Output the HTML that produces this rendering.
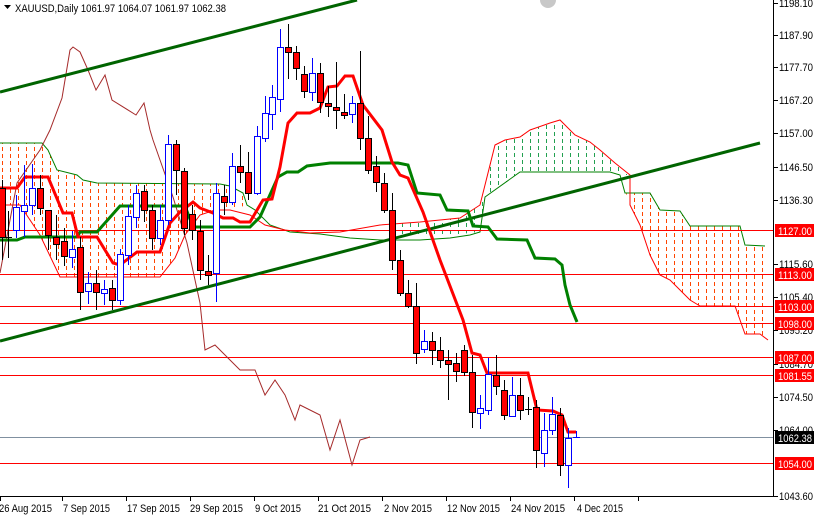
<!DOCTYPE html>
<html><head><meta charset="utf-8"><style>
html,body{margin:0;padding:0;background:#fff;width:814px;height:516px;overflow:hidden}
svg{display:block;font-family:"Liberation Sans",sans-serif}
</style></head><body>
<svg width="814" height="516" viewBox="0 0 814 516" xmlns="http://www.w3.org/2000/svg">
<defs>
<clipPath id="c1"><polygon points="0,143 42,143 48,150 57,170 77,175 83,180 97,183 220,184 230,186 243,193 247,205 230,210 215,210 200,215 185,235 175,258 160,277 60,277 40,235 20,205 0,205"/></clipPath>
<clipPath id="c2"><polygon points="485,185 495,145 505,140 520,137 530,130 550,123 560,120 575,135 590,142 600,150 615,163 630,175 620,175 610,172 520,172 485,197"/></clipPath>
<clipPath id="c3"><polygon points="620,175 625,193 650,193 660,210 680,211 690,226 740,226 745,245 765,246 768,340 760,334 745,334 740,320 735,306 700,306 690,300 680,290 670,280 660,275 650,255 640,225 630,205"/></clipPath>
<clipPath id="c4"><polygon points="385,225 420,222 460,218 480,205 485,197 480,232 440,236 400,236"/></clipPath>
</defs>
<rect width="814" height="516" fill="#fff"/>
<!-- clouds -->
<g stroke-width="1" stroke-dasharray="4,3">
<path clip-path="url(#c1)" stroke="#ff4500" d="M2.5 140V280M10.5 140V280M18.5 140V280M26.5 140V280M34.5 140V280M42.5 140V280M50.5 140V280M58.5 140V280M66.5 140V280M74.5 140V280M82.5 140V280M90.5 140V280M98.5 140V280M106.5 140V280M114.5 140V280M122.5 140V280M130.5 140V280M138.5 140V280M146.5 140V280M154.5 140V280M162.5 140V280M170.5 140V280M178.5 140V280M186.5 140V280M194.5 140V280M202.5 140V280M210.5 140V280M218.5 140V280M226.5 140V280M234.5 140V280M242.5 140V280"/>
<path clip-path="url(#c2)" stroke="#22a050" d="M490.5 118V200M498.5 118V200M506.5 118V200M514.5 118V200M522.5 118V200M530.5 118V200M538.5 118V200M546.5 118V200M554.5 118V200M562.5 118V200M570.5 118V200M578.5 118V200M586.5 118V200M594.5 118V200M602.5 118V200M610.5 118V200M618.5 118V200M626.5 118V200"/>
<path clip-path="url(#c3)" stroke="#ff4500" d="M626.5 170V342M634.5 170V342M642.5 170V342M650.5 170V342M658.5 170V342M666.5 170V342M674.5 170V342M682.5 170V342M690.5 170V342M698.5 170V342M706.5 170V342M714.5 170V342M722.5 170V342M730.5 170V342M738.5 170V342M746.5 170V342M754.5 170V342M762.5 170V342"/>
<path clip-path="url(#c4)" stroke="#22a050" d="M394.5 195V240M402.5 195V240M410.5 195V240M418.5 195V240M426.5 195V240M434.5 195V240M442.5 195V240M450.5 195V240M458.5 195V240M466.5 195V240M474.5 195V240M482.5 195V240"/>
</g>
<!-- senkou lines -->
<polyline fill="none" stroke="#008000" stroke-width="1" points="0,143 42,143 48,150 57,170 77,175 83,180 97,183 220,184 230,186 243,193 247,205 255,210 270,225 290,232 320,234 350,238 380,240 420,240 450,238 470,235 480,232 485,197 520,172 610,172 620,175 625,193 650,193 660,210 680,211 690,226 740,226 745,245 765,246"/>
<polyline fill="none" stroke="#ff0000" stroke-width="1" points="0,205 20,205 40,235 60,277 160,277 175,258 185,235 200,215 215,210 230,210 250,215 265,225 285,230 310,233 340,232 380,225 420,222 460,218 480,205 485,185 495,145 505,140 520,137 530,130 550,123 560,120 575,135 590,142 600,150 615,163 630,175 630,205 640,225 650,255 660,275 670,280 680,290 690,300 700,306 735,306 740,320 745,334 760,334 768,340"/>
<!-- horizontal levels -->
<g stroke="#ff0000" stroke-width="1">
<line x1="0" y1="230.5" x2="773" y2="230.5"/><line x1="0" y1="274.5" x2="773" y2="274.5"/>
<line x1="0" y1="306.5" x2="773" y2="306.5"/><line x1="0" y1="323.5" x2="773" y2="323.5"/>
<line x1="0" y1="357.5" x2="773" y2="357.5"/><line x1="0" y1="375.5" x2="773" y2="375.5"/>
<line x1="0" y1="463.5" x2="773" y2="463.5"/></g>
<line x1="0" y1="437.5" x2="773" y2="437.5" stroke="#8090a0"/>
<!-- chikou -->
<polyline fill="none" stroke="#a52a2a" stroke-width="1" points="0,273 10,220 17,183 40,150 50,130 62,98 70,50 73,47 80,52 88,70 96,90 105,75 112,100 136,115 144,103 150,130 153,140 173,197 187,243 200,303 205,350 215,345 240,370 255,370 265,395 275,380 285,395 295,420 300,405 320,415 330,450 340,420 352,465 360,440 370,437"/>
<!-- trendlines -->
<line x1="0" y1="92" x2="357" y2="0" stroke="#006400" stroke-width="3"/>
<line x1="0" y1="341" x2="760" y2="143" stroke="#006400" stroke-width="3"/>
<!-- kijun -->
<polyline fill="none" stroke="#008000" stroke-width="3" points="0,240 17,240 25,237 77,237 80,232 97,232 120,206 185,206 193,227 250,227 260,217 278,177 287,172 298,172 307,166 330,163 398,163 408,165 417,193 440,195 447,210 468,211 473,226 488,227 497,239 527,240 535,258 555,259 562,265 565,285 570,305 577,322"/>
<!-- tenkan -->
<polyline fill="none" stroke="#ff0000" stroke-width="3" points="0,188 17,188 25,177 48,177 63,213 72,213 78,237 97,237 113,263 120,265 137,252 160,252 170,223 180,212 193,202 200,208 213,213 223,218 233,218 240,222 250,222 263,200 272,199 280,167 288,123 297,113 310,113 320,108 328,87 337,86 345,76 353,76 363,105 382,130 392,162 400,175 408,178 423,212 440,260 463,320 472,353 480,355 487,373 528,373 537,410 553,411 562,415 568,432 576,432"/>
<!-- bear candles -->
<g stroke="#000" stroke-width="1" fill="#ff0000">
<path d="M2.5 180V260M40.5 175V215M48.5 210V250M56.5 215V260M64.5 228V266M80.5 237V310M96.5 270V310M112.5 280V310M144.5 185V222M152.5 205V250M176.5 140V195M184.5 168V235M192.5 205V240M200.5 220V280M208.5 255V285M224.5 185V215M240.5 145V183M248.5 152V200M288.5 24V79M296.5 46V80M304.5 66V98M320.5 63V113M328.5 86V117M336.5 62V129M344.5 94V119M360.5 51V150M368.5 116V174M376.5 156V192M384.5 173V213M392.5 193V270M400.5 250V296M408.5 280V308M416.5 283V364M432.5 332V365M440.5 337V368M448.5 350V400M456.5 353V382M464.5 345V376M472.5 355V428M496.5 355V395M504.5 380V420M520.5 378V420M536.5 400V468M560.5 408V476M8.5 211V258M528.5 397V415"/>
<rect x="-1.5" y="188.5" width="7" height="49"/><rect x="37.5" y="188.5" width="6" height="20"/><rect x="45.5" y="210.5" width="6" height="25"/><rect x="53.5" y="237.5" width="6" height="7"/><rect x="61.5" y="241.5" width="6" height="15"/><rect x="77.5" y="247.5" width="6" height="45"/><rect x="93.5" y="283.5" width="6" height="9"/><rect x="109.5" y="288.5" width="6" height="12"/><rect x="141.5" y="191.5" width="6" height="19"/><rect x="149.5" y="210.5" width="6" height="28"/><rect x="173.5" y="144.5" width="6" height="26"/><rect x="181.5" y="171.5" width="6" height="57"/><rect x="189.5" y="214.5" width="6" height="16"/><rect x="197.5" y="231.5" width="6" height="39"/><rect x="205.5" y="271.5" width="6" height="4"/><rect x="221.5" y="196.5" width="6" height="6"/><rect x="237.5" y="166.5" width="6" height="6"/><rect x="245.5" y="172.5" width="6" height="21"/><rect x="285.5" y="47.5" width="6" height="5"/><rect x="293.5" y="52.5" width="6" height="16"/><rect x="301.5" y="74.5" width="6" height="17"/><rect x="317.5" y="73.5" width="6" height="29"/><rect x="325.5" y="103.5" width="6" height="3"/><rect x="333.5" y="107.5" width="6" height="3"/><rect x="341.5" y="112.5" width="6" height="3"/><rect x="357.5" y="103.5" width="6" height="35"/><rect x="365.5" y="138.5" width="6" height="32"/><rect x="373.5" y="166.5" width="6" height="16"/><rect x="381.5" y="183.5" width="6" height="27"/><rect x="389.5" y="210.5" width="6" height="50"/><rect x="397.5" y="260.5" width="6" height="33"/><rect x="405.5" y="293.5" width="6" height="13"/><rect x="413.5" y="306.5" width="6" height="47"/><rect x="429.5" y="341.5" width="6" height="9"/><rect x="437.5" y="350.5" width="6" height="10"/><rect x="445.5" y="360.5" width="6" height="4"/><rect x="453.5" y="363.5" width="6" height="8"/><rect x="461.5" y="350.5" width="6" height="22"/><rect x="469.5" y="372.5" width="6" height="40"/><rect x="493.5" y="375.5" width="6" height="11"/><rect x="501.5" y="390.5" width="6" height="25"/><rect x="517.5" y="395.5" width="6" height="15"/><rect x="533.5" y="407.5" width="6" height="43"/><rect x="557.5" y="415.5" width="6" height="50"/>
<path d="M5 237.5H12M525 409.5H532" fill="none"/>
</g>
<!-- bull candles -->
<g stroke="#0000ff" stroke-width="1" fill="#fff">
<path d="M16.5 195V238M24.5 165V237M32.5 164V215M72.5 231V268M88.5 272V304M104.5 280V305M120.5 249V305M128.5 205V265M136.5 185V228M160.5 205V245M168.5 135V225M216.5 183V302M232.5 153V205M257.5 126V195M265.5 96V142M272.5 85V130M280.5 29V112M312.5 58V101M352.5 96V123M424.5 330V353M480.5 395V429M488.5 358V415M512.5 377V417M544.5 413V467M552.5 397V435M568.5 428V488M576.5 431V438M573 437.5H580"/>
<rect x="13.5" y="207.5" width="6" height="23"/><rect x="21.5" y="205.5" width="6" height="6"/><rect x="29.5" y="188.5" width="6" height="17"/><rect x="69.5" y="249.5" width="6" height="8"/><rect x="85.5" y="283.5" width="6" height="8"/><rect x="101.5" y="289.5" width="6" height="4"/><rect x="117.5" y="254.5" width="6" height="46"/><rect x="125.5" y="216.5" width="6" height="39"/><rect x="133.5" y="193.5" width="6" height="24"/><rect x="157.5" y="220.5" width="6" height="18"/><rect x="165.5" y="144.5" width="6" height="76"/><rect x="213.5" y="193.5" width="6" height="80"/><rect x="229.5" y="166.5" width="6" height="36"/><rect x="254.5" y="136.5" width="6" height="57"/><rect x="262.5" y="113.5" width="6" height="25"/><rect x="269.5" y="97.5" width="6" height="17"/><rect x="277.5" y="47.5" width="6" height="52"/><rect x="309.5" y="73.5" width="6" height="19"/><rect x="349.5" y="103.5" width="6" height="11"/><rect x="421.5" y="341.5" width="6" height="8"/><rect x="477.5" y="408.5" width="6" height="5"/><rect x="485.5" y="374.5" width="6" height="36"/><rect x="509.5" y="395.5" width="6" height="21"/><rect x="541.5" y="430.5" width="6" height="23"/><rect x="549.5" y="414.5" width="6" height="16"/><rect x="565.5" y="438.5" width="6" height="27"/>
</g>
<!-- axes -->
<line x1="773.5" y1="0" x2="773.5" y2="497" stroke="#000"/>
<line x1="0" y1="496.5" x2="774" y2="496.5" stroke="#000"/>
<path d="M540 0A8 8 0 0 0 556 0Z" fill="#c8c8c8"/>
<g font-size="11" fill="#000" lengthAdjust="spacingAndGlyphs">
<path d="M774 3.5h4M774 35.5h4M774 67.5h4M774 100.5h4M774 133.5h4M774 167.5h4M774 200.5h4M774 264.5h4M774 297.5h4M774 330.5h4M774 364.5h4M774 397.5h4M774 430.5h4M774 496.5h4" stroke="#000"/>
<text x="779" y="7" textLength="34" lengthAdjust="spacingAndGlyphs">1198.10</text><text x="779" y="39" textLength="34" lengthAdjust="spacingAndGlyphs">1187.90</text><text x="779" y="71" textLength="34" lengthAdjust="spacingAndGlyphs">1177.70</text><text x="779" y="104" textLength="34" lengthAdjust="spacingAndGlyphs">1167.20</text><text x="779" y="137" textLength="34" lengthAdjust="spacingAndGlyphs">1157.00</text><text x="779" y="171" textLength="34" lengthAdjust="spacingAndGlyphs">1146.50</text><text x="779" y="204" textLength="34" lengthAdjust="spacingAndGlyphs">1136.30</text><text x="779" y="268" textLength="34" lengthAdjust="spacingAndGlyphs">1115.60</text><text x="779" y="301" textLength="34" lengthAdjust="spacingAndGlyphs">1105.40</text><text x="779" y="334" textLength="34" lengthAdjust="spacingAndGlyphs">1095.20</text><text x="779" y="368" textLength="34" lengthAdjust="spacingAndGlyphs">1084.70</text><text x="779" y="401" textLength="34" lengthAdjust="spacingAndGlyphs">1074.50</text><text x="779" y="434" textLength="34" lengthAdjust="spacingAndGlyphs">1064.00</text><text x="779" y="500" textLength="34" lengthAdjust="spacingAndGlyphs">1043.60</text>
</g>
<g font-size="11" fill="#fff">
<rect x="775" y="224" width="39" height="13" fill="#f00"/><text x="778" y="235" textLength="34" lengthAdjust="spacingAndGlyphs">1127.00</text>
<rect x="775" y="268" width="39" height="13" fill="#f00"/><text x="778" y="279" textLength="34" lengthAdjust="spacingAndGlyphs">1113.00</text>
<rect x="775" y="300" width="39" height="13" fill="#f00"/><text x="778" y="311" textLength="34" lengthAdjust="spacingAndGlyphs">1103.00</text>
<rect x="775" y="317" width="39" height="13" fill="#f00"/><text x="778" y="328" textLength="34" lengthAdjust="spacingAndGlyphs">1098.00</text>
<rect x="775" y="351" width="39" height="13" fill="#f00"/><text x="778" y="362" textLength="34" lengthAdjust="spacingAndGlyphs">1087.00</text>
<rect x="775" y="369" width="39" height="13" fill="#f00"/><text x="778" y="380" textLength="34" lengthAdjust="spacingAndGlyphs">1081.55</text>
<rect x="775" y="431" width="39" height="13" fill="#000"/><text x="778" y="442" textLength="34" lengthAdjust="spacingAndGlyphs">1062.38</text>
<rect x="775" y="457" width="39" height="13" fill="#f00"/><text x="778" y="468" textLength="34" lengthAdjust="spacingAndGlyphs">1054.00</text>
</g>
<g font-size="11" fill="#000">
<path d="M0.5 497v4M62.5 497v4M126.5 497v4M190.5 497v4M254.5 497v4M318.5 497v4M382.5 497v4M446.5 497v4M510.5 497v4M574.5 497v4M638.5 497v4" stroke="#000"/>
<text x="-1" y="512" textLength="53" lengthAdjust="spacingAndGlyphs">26 Aug 2015</text><text x="63" y="512" textLength="47" lengthAdjust="spacingAndGlyphs">7 Sep 2015</text><text x="127" y="512" textLength="53" lengthAdjust="spacingAndGlyphs">17 Sep 2015</text><text x="190" y="512" textLength="53" lengthAdjust="spacingAndGlyphs">29 Sep 2015</text><text x="255" y="512" textLength="46" lengthAdjust="spacingAndGlyphs">9 Oct 2015</text><text x="318" y="512" textLength="53" lengthAdjust="spacingAndGlyphs">21 Oct 2015</text><text x="384" y="512" textLength="48" lengthAdjust="spacingAndGlyphs">2 Nov 2015</text><text x="447" y="512" textLength="53" lengthAdjust="spacingAndGlyphs">12 Nov 2015</text><text x="511" y="512" textLength="54" lengthAdjust="spacingAndGlyphs">24 Nov 2015</text><text x="577" y="512" textLength="46" lengthAdjust="spacingAndGlyphs">4 Dec 2015</text>
<path d="M4 5h7l-3.5 4z" fill="#000"/>
<text x="15" y="12" textLength="211" lengthAdjust="spacingAndGlyphs">XAUUSD,Daily  1061.97 1064.07 1061.97 1062.38</text>
</g>
</svg>
</body></html>
